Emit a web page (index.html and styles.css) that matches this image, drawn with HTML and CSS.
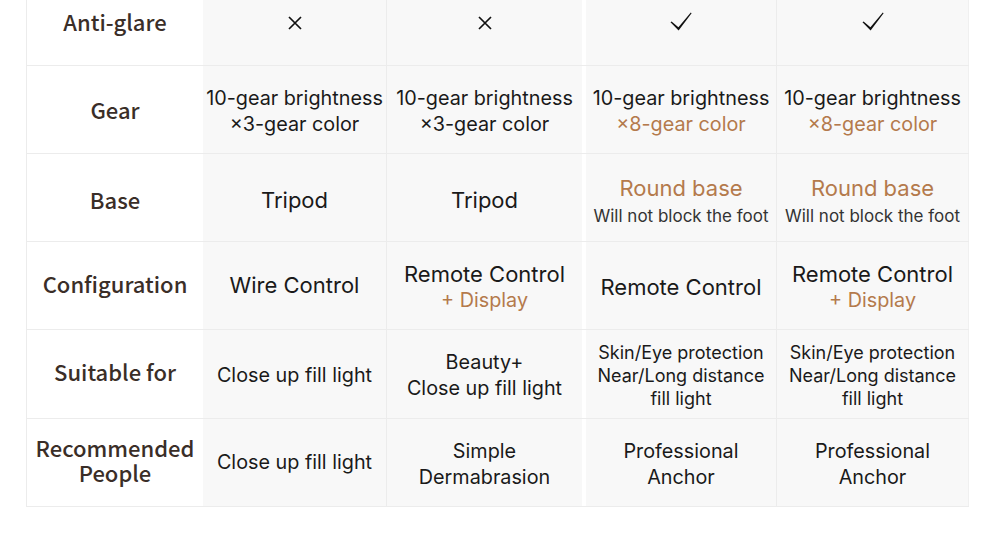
FILE: index.html
```html
<!DOCTYPE html>
<html lang="en">
<head>
<meta charset="utf-8">
<title>Comparison</title>
<link rel="stylesheet" href="styles.css">
</head>
<body>
<div class="table">
  <div class="row">
    <div class="cell label">Anti-glare</div>
    <div class="cell c2"><svg class="icon-x" viewBox="0 0 14 14" width="14" height="14"><path d="M1 1L13 13M13 1L1 13" stroke="#111" stroke-width="1.7" fill="none"/></svg></div>
    <div class="cell c3"><svg class="icon-x" viewBox="0 0 14 14" width="14" height="14"><path d="M1 1L13 13M13 1L1 13" stroke="#111" stroke-width="1.7" fill="none"/></svg></div>
    <div class="cell c4"><svg class="icon-check" viewBox="0 0 22 19" width="22" height="19"><path d="M0.5 10.2L1.6 9.4L8.4 15.2L20.8 0.4L21.6 1.2L8.6 18.6Z" fill="#111"/></svg></div>
    <div class="cell c5"><svg class="icon-check" viewBox="0 0 22 19" width="22" height="19"><path d="M0.5 10.2L1.6 9.4L8.4 15.2L20.8 0.4L21.6 1.2L8.6 18.6Z" fill="#111"/></svg></div>
  </div>
  <div class="row">
    <div class="cell label">Gear</div>
    <div class="cell c2"><p class="t">10-gear brightness<br>×3-gear color</p></div>
    <div class="cell c3"><p class="t">10-gear brightness<br>×3-gear color</p></div>
    <div class="cell c4"><p class="t">10-gear brightness<br><span class="accent">×8-gear color</span></p></div>
    <div class="cell c5"><p class="t">10-gear brightness<br><span class="accent">×8-gear color</span></p></div>
  </div>
  <div class="row">
    <div class="cell label down">Base</div>
    <div class="cell c2"><p class="t big low">Tripod</p></div>
    <div class="cell c3"><p class="t big low">Tripod</p></div>
    <div class="cell c4 stack"><p class="t big accent">Round base</p><p class="t small">Will not block the foot</p></div>
    <div class="cell c5 stack"><p class="t big accent">Round base</p><p class="t small">Will not block the foot</p></div>
  </div>
  <div class="row">
    <div class="cell label up">Configuration</div>
    <div class="cell c2 flat"><p class="t big">Wire Control</p></div>
    <div class="cell c3"><p class="t big">Remote Control</p><p class="t accent">+ Display</p></div>
    <div class="cell c4"><p class="t big">Remote Control</p></div>
    <div class="cell c5"><p class="t big">Remote Control</p><p class="t accent">+ Display</p></div>
  </div>
  <div class="row tall">
    <div class="cell label up2">Suitable for</div>
    <div class="cell c2"><p class="t">Close up fill light</p></div>
    <div class="cell c3"><p class="t">Beauty+<br>Close up fill light</p></div>
    <div class="cell c4"><p class="t dense">Skin/Eye protection<br>Near/Long distance<br>fill light</p></div>
    <div class="cell c5"><p class="t dense">Skin/Eye protection<br>Near/Long distance<br>fill light</p></div>
  </div>
  <div class="row">
    <div class="cell label up2">Recommended<br>People</div>
    <div class="cell c2 flat"><p class="t">Close up fill light</p></div>
    <div class="cell c3"><p class="t">Simple<br>Dermabrasion</p></div>
    <div class="cell c4"><p class="t">Professional<br>Anchor</p></div>
    <div class="cell c5"><p class="t">Professional<br>Anchor</p></div>
  </div>
</div>
</body>
</html>
```
FILE: styles.css
```css
* { box-sizing: border-box; }
html, body { margin: 0; padding: 0; background: #fff; }
body {
  font-family: Inter, "Noto Sans", sans-serif;
  color: #1a1a1a;
  overflow: hidden;
}
.table {
  margin-left: 26px;
  margin-top: -22px;
  width: 943px;
  border-left: 1px solid #ececec;
}
.row {
  display: grid;
  grid-template-columns: 176px 184px 195px 195px 192px;
  height: 88px;
  border-bottom: 1px solid #ececec;
}
.row.tall { height: 89px; }
.cell {
  display: flex;
  flex-direction: column;
  align-items: center;
  justify-content: center;
  text-align: center;
  background: #f8f8f8;
  padding-top: 2px;
}
.cell.flat { padding-top: 0; padding-bottom: 1px; }
.cell.stack { padding-top: 8px; }
.cell.label {
  background: #fff;
  color: #3a2e28;
  font-family: "Noto Sans CJK SC", "Noto Sans", sans-serif;
  font-size: 22px;
  font-weight: 500;
  line-height: 25px;
  padding: 0;
}
.cell.label.down { padding-top: 4px; }
.cell.label.up { padding-bottom: 4px; }
.cell.label.up2 { padding-bottom: 6px; }
.c2 { border-right: 1px solid #ececec; }
.c4 { border-left: 4px solid #fff; border-right: 1px solid #ececec; }
.c5 { border-right: 1px solid #f0f0f0; }
.t {
  margin: 0;
  font-size: 19.8px;
  line-height: 26px;
  white-space: nowrap;
}
.t.big { font-size: 22px; }
.t.low { margin-top: 3px; }
.t.small { font-size: 17px; color: #333; line-height: 26px; margin-top: 2px; }
.t.dense { font-size: 18px; line-height: 23px; }
.accent { color: #b47a4c; }
.icon-x { display: block; }
.icon-check { display: block; margin-top: -3px; }
```
